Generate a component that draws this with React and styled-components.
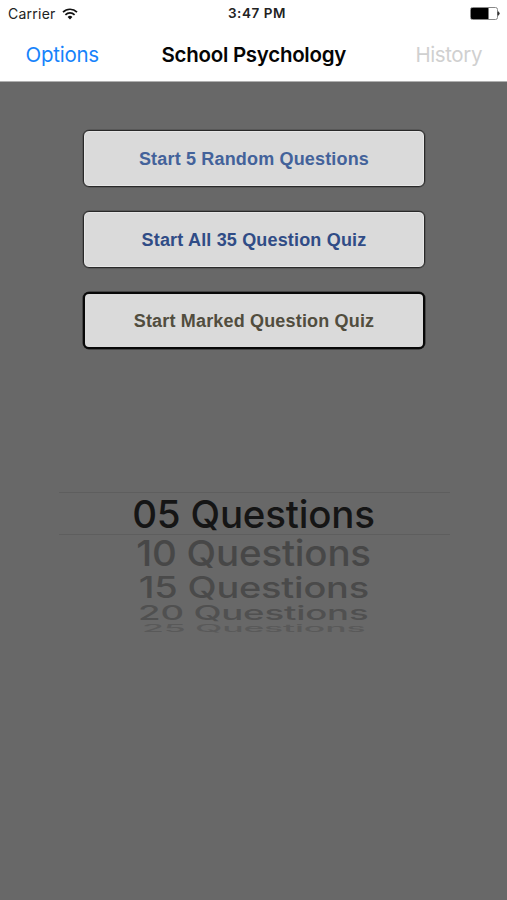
import React from 'react';
import styled, { createGlobalStyle } from 'styled-components';

const GlobalStyle = createGlobalStyle`
  *, *::before, *::after { box-sizing: border-box; }
  body { margin: 0; }
`;

const Screen = styled.div`
  width: 507px;
  height: 900px;
  display: flex;
  flex-direction: column;
  overflow: hidden;
  background: #686868;
  font-family: Inter, 'Liberation Sans', sans-serif;
`;

const Header = styled.header`
  height: 82px;
  flex: none;
  background: #fff;
  border-bottom: 1px solid #b0b0b0;
`;

const StatusBar = styled.div`
  height: 27px;
  padding: 0 7px 0 8px;
  display: grid;
  grid-template-columns: 1fr auto 1fr;
  align-items: center;
  color: #222;
`;

const Carrier = styled.div`
  display: flex;
  align-items: center;
  gap: 6px;
  font-size: 14px;
  line-height: 26px;
  height: 26px;
  letter-spacing: 0.25px;
`;

const Clock = styled.div`
  padding: 0 0 0 6px;
  font-size: 13.5px;
  font-weight: 600;
  line-height: 27px;
  letter-spacing: 0.55px;
`;

const BatteryIcon = styled.svg`
  justify-self: end;
  display: block;
`;

const NavBar = styled.nav`
  height: 54px;
  padding: 1px 25px 0 25.5px;
  display: grid;
  grid-template-columns: 1fr auto 1fr;
  align-items: center;
`;

const NavButton = styled.button`
  border: 0;
  padding: 0;
  background: none;
  font: 400 20.5px/54px Inter, sans-serif;
  letter-spacing: ${(p) => p.$spacing || '0'};
  color: ${(p) => (p.disabled ? '#d0d0d0' : '#1683fb')};
  justify-self: ${(p) => (p.$end ? 'end' : 'start')};
`;

const Title = styled.h1`
  margin: 0;
  font-size: 20.5px;
  font-weight: 600;
  line-height: 54px;
  letter-spacing: -0.28px;
  color: #050505;
`;

const QuizActions = styled.section`
  display: flex;
  flex-direction: column;
  align-items: center;
  gap: 24px;
  padding: 48px 0 0 1px;
`;

const QuizButton = styled.button`
  width: 342px;
  height: 57px;
  padding: 0;
  border: ${(p) => (p.$marked ? '2px solid #080808' : '1.5px solid #292929')};
  border-radius: 6px;
  background: #dadada;
  box-shadow: ${(p) => (p.$marked ? '0 0 0 0.5px #222' : 'inset 0 0 0 1px #e6e6e6, 0 0 0 0.5px #484848')};
  color: ${(p) => p.$color};
  font: 700 18px/20px 'Liberation Sans', Arial, sans-serif;
  letter-spacing: 0.17px;
`;

const Picker = styled.section`
  width: 391px;
  margin: 143px 57px 0 59px;
  display: flex;
  flex-direction: column;
`;

const PickerRow = styled.div`
  height: ${(p) => p.$height}px;
  padding-right: 2px;
  display: flex;
  align-items: center;
  justify-content: center;
  color: ${(p) => p.$color};
`;

const SelectedRow = styled(PickerRow)`
  padding-top: 1px;
  border-top: 1px solid #5e5e5e;
  border-bottom: 1px solid #5e5e5e;
`;

const PickerLabel = styled.span`
  font-size: 38.5px;
  font-weight: 550;
  letter-spacing: -0.2px;
  line-height: 1;
  white-space: nowrap;
  transform: scale(${(p) => p.$x}, ${(p) => p.$y});
`;

const upcoming = [
  { label: '10 Questions', height: 36, x: 1, y: 0.93, color: '#474747' },
  { label: '15 Questions', height: 33, x: 0.985, y: 0.76, color: '#4a4a4a' },
  { label: '20 Questions', height: 18, x: 0.95, y: 0.52, color: '#505050' },
  { label: '25 Questions', height: 13, x: 0.925, y: 0.26, color: '#595959' },
];

function Wifi() {
  return (
    <svg width="16" height="12" viewBox="0 0 16 12" fill="none" stroke="#111" strokeWidth="1.7">
      <path d="M1 4.1a10 10 0 0 1 14 0" />
      <path d="M3.4 6.8a6.6 6.6 0 0 1 9.2 0" />
      <path d="M8 11.4 5.6 9a3.5 3.5 0 0 1 4.8 0Z" fill="#111" stroke="none" />
    </svg>
  );
}

function Battery() {
  return (
    <BatteryIcon width="30" height="13" viewBox="0 0 30 13">
      <rect x=".5" y=".5" width="27" height="12" rx="2" fill="#fff" stroke="#888" />
      <path d="M2 1h16.5v11H2a1 1 0 0 1-1-1V2a1 1 0 0 1 1-1Z" fill="#000" />
      <path d="M28 4.8a1.8 1.8 0 0 1 0 3.4Z" fill="#333" stroke="#333" />
    </BatteryIcon>
  );
}

export default function App() {
  return (
    <>
      <GlobalStyle />
      <Screen>
        <Header>
          <StatusBar>
            <Carrier>Carrier<Wifi /></Carrier>
            <Clock>3:47 PM</Clock>
            <Battery />
          </StatusBar>
          <NavBar>
            <NavButton $spacing="-0.25px">Options</NavButton>
            <Title>School Psychology</Title>
            <NavButton disabled $end $spacing="-0.4px">History</NavButton>
          </NavBar>
        </Header>
        <QuizActions>
          <QuizButton $color="#43629a">Start 5 Random Questions</QuizButton>
          <QuizButton $color="#304c86">Start All 35 Question Quiz</QuizButton>
          <QuizButton $color="#514d3e" $marked>Start Marked Question Quiz</QuizButton>
        </QuizActions>
        <Picker>
          <SelectedRow $height={43} $color="#151515">
            <PickerLabel $x={1} $y={1}>05 Questions</PickerLabel>
          </SelectedRow>
          {upcoming.map((row) => (
            <PickerRow key={row.label} $height={row.height} $color={row.color}>
              <PickerLabel $x={row.x} $y={row.y}>{row.label}</PickerLabel>
            </PickerRow>
          ))}
        </Picker>
      </Screen>
    </>
  );
}
